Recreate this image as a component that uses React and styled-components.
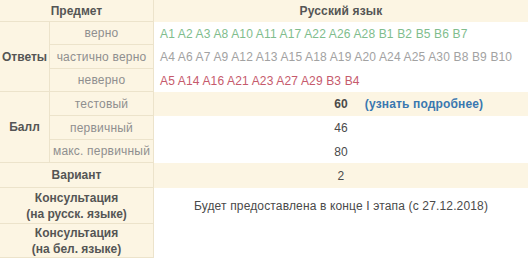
import React from "react";
import styled, { createGlobalStyle } from "styled-components";

const GlobalStyle = createGlobalStyle`
  html, body {
    margin: 0;
    padding: 0;
    background: #ffffff;
  }
  body {
    font-family: "Liberation Sans", Arial, sans-serif;
    font-size: 12px;
    color: #4a4a4a;
  }
`;

const CREAM = "#fcf5e3";
const LINE = "#ece3cb";

const Table = styled.div`
  display: grid;
  grid-template-columns: 50px 104px 1fr;
  grid-template-rows: 22px 23px 24px 23px 24px 24px 23px 25px 36px 34px;
  width: 528px;
  height: 258px;
  background: #fff;
`;

const Label = styled.div`
  grid-column: ${p => p.$col || "auto"};
  grid-row: ${p => p.$row || "auto"};
  display: flex;
  align-items: center;
  justify-content: center;
  text-align: center;
  background: ${CREAM};
  border-bottom: 1px solid ${LINE};
  border-right: 1px solid ${LINE};
  font-size: 12px;
  font-weight: ${p => (p.$bold ? 700 : 400)};
  color: ${p => (p.$bold ? "#555" : "#8f8f8f")};
  line-height: 16px;
  letter-spacing: ${p => (p.$bold ? "0" : "0.2px")};
`;

const Value = styled.div`
  grid-column: 3;
  grid-row: ${p => p.$row || "auto"};
  display: flex;
  align-items: center;
  justify-content: ${p => (p.$center ? "center" : "flex-start")};
  padding: 0 6px;
  background: ${p => (p.$cream ? CREAM : "#fff")};
  font-weight: ${p => (p.$bold ? 700 : 400)};
  color: ${p => p.$color || "#4a4a4a"};
  white-space: nowrap;
  letter-spacing: 0.15px;
`;

const Score = styled(Value)`
  display: grid;
  grid-template-columns: 1fr auto 1fr;
  align-items: center;
`;

const Num = styled.span`
  grid-column: 2;
  font-weight: ${p => (p.$bold ? 700 : 400)};
  color: #4a4a4a;
`;

const Link = styled.a`
  grid-column: 3;
  margin-left: 17px;
  font-weight: 700;
  color: #3a78b0;
  text-decoration: none;
`;

export default function App() {
  return (
    <>
      <GlobalStyle />
      <Table>
        <Label $col="1 / 3" $bold>Предмет</Label>
        <Value $cream $bold $center $color="#555">Русский язык</Value>

        <Label $col="1" $row="2 / 5" $bold>Ответы</Label>
        <Label $col="2">верно</Label>
        <Value $color="#80bd8d">A1 A2 A3 A8 A10 A11 A17 A22 A26 A28 B1 B2 B5 B6 B7</Value>
        <Label $col="2">частично верно</Label>
        <Value $color="#a2a2a2">A4 A6 A7 A9 A12 A13 A15 A18 A19 A20 A24 A25 A30 B8 B9 B10</Value>
        <Label $col="2">неверно</Label>
        <Value $color="#c65a6c">A5 A14 A16 A21 A23 A27 A29 B3 B4</Value>

        <Label $col="1" $row="5 / 8" $bold>Балл</Label>
        <Label $col="2">тестовый</Label>
        <Score $cream>
          <Num $bold>60</Num>
          <Link href="#">(узнать подробнее)</Link>
        </Score>
        <Label $col="2">первичный</Label>
        <Score>
          <Num>46</Num>
        </Score>
        <Label $col="2">макс. первичный</Label>
        <Score>
          <Num>80</Num>
        </Score>

        <Label $col="1 / 3" $bold>Вариант</Label>
        <Value $cream $center>2</Value>

        <Label $col="1 / 3" $bold>Консультация<br />(на русск. языке)</Label>
        <Value $center>Будет предоставлена в конце I этапа (с 27.12.2018)</Value>
        <Label $col="1 / 3" $bold>Консультация<br />(на бел. языке)</Label>
        <Value />
      </Table>
    </>
  );
}
